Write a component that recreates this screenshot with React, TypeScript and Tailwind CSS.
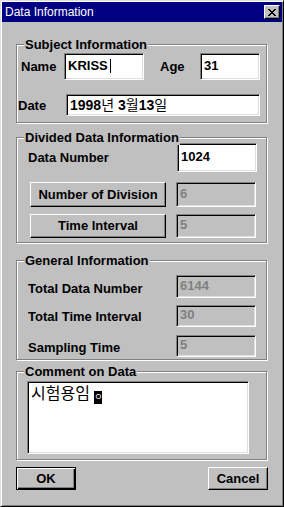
import type { ReactNode } from "react";

const font = { fontFamily: '"Liberation Sans", Arial, "Noto Sans CJK KR", sans-serif' };

const sunken =
  "border border-t-[#808080] border-l-[#808080] border-b-white border-r-white shadow-[inset_1px_1px_0_#000,inset_-1px_-1px_0_#dfdfdf]";
const raised =
  "border border-t-white border-l-white border-b-black border-r-black shadow-[inset_-1px_-1px_0_#808080]";

const Group = ({ title, className, children }: { title: string; className: string; children: ReactNode }) => (
  <div className={`relative ml-[15px] w-[251px] border border-[#808080] shadow-[inset_1px_1px_0_#fff,1px_1px_0_#fff] ${className}`}>
    <span className="absolute left-[7px] top-[-8px] bg-[#c0c0c0] px-[1px] text-[13px] font-bold leading-[15px] text-black">
      {title}
    </span>
    {children}
  </div>
);

const Edit = ({ value, w, h, disabled, children }: { value?: string; w: string; h: string; disabled?: boolean; children?: ReactNode }) => (
  <div
    className={`${sunken} ${w} ${h} flex items-center pl-[3px] pb-[2px] text-[13px] font-bold ${
      disabled ? "bg-[#c0c0c0] text-[#808080]" : "bg-white text-black"
    }`}
  >
    {value}
    {children}
  </div>
);

const PushButton = ({ label, w, h }: { label: string; w: string; h: string }) => (
  <button className={`${raised} ${w} ${h} bg-[#c0c0c0] text-[13px] font-bold text-black`}>{label}</button>
);

export default function App() {
  return (
    <div
      className="flex h-[507px] w-[284px] flex-col border border-t-[#dfdfdf] border-l-[#dfdfdf] border-b-black border-r-black bg-[#c0c0c0] shadow-[inset_1px_1px_0_#fff,inset_-1px_-1px_0_#808080]"
      style={font}
    >
      <div className="mx-[1px] mt-[1px] flex h-[20px] items-center justify-between bg-[#000080] pl-[3px] pr-[2px]">
        <span className="text-[12px] leading-none text-white">Data Information</span>
        <button className={`${raised} flex h-[14px] w-[16px] items-center justify-center bg-[#c0c0c0]`}>
          <svg width="8" height="7" viewBox="0 0 8 7" shapeRendering="crispEdges">
            <path d="M0 0h2v1h-2zM6 0h2v1h-2zM1 1h2v1h-2zM5 1h2v1h-2zM2 2h4v1h-4zM3 3h2v1h-2zM2 4h4v1h-4zM1 5h2v1h-2zM5 5h2v1h-2zM0 6h2v1h-2zM6 6h2v1h-2z" fill="#000" />
          </svg>
        </button>
      </div>

      <Group title="Subject Information" className="mt-[22px] pb-[6px]">
        <div className="mt-[8px] flex h-[27px] items-center pl-[4px] text-[13px] font-bold">
          <span className="w-[43px]">Name</span>
          <Edit value="KRISS" w="w-[80px]" h="h-[27px]">
            <span className="ml-[2px] h-[14px] w-[1px] bg-black" />
          </Edit>
          <span className="ml-[16px] w-[40px]">Age</span>
          <Edit value="31" w="w-[60px]" h="h-[27px]" />
        </div>
        <div className="mt-[14px] flex h-[22px] items-center pl-[1px] text-[13px] font-bold">
          <span className="w-[48px] pt-[2px]">Date</span>
          <div className={`${sunken} flex h-[22px] w-[194px] items-center bg-white pl-[3px] text-[14px] font-bold`}>
            1998<span className="font-normal">년</span>&nbsp;3<span className="font-normal">월</span>13
            <span className="font-normal">일</span>
          </div>
        </div>
      </Group>

      <Group title="Divided Data Information" className="mt-[14px] pb-[4px]">
        <div className="mt-[5px] flex h-[29px] items-center pl-[11px] text-[13px] font-bold">
          <span className="w-[149px]">Data Number</span>
          <Edit value="1024" w="w-[80px]" h="h-[29px]" />
        </div>
        <div className="mt-[10px] flex h-[25px] items-center pl-[13px]">
          <PushButton label="Number of Division" w="w-[136px]" h="h-[25px]" />
          <div className="ml-[10px]">
            <Edit value="6" w="w-[80px]" h="h-[25px]" disabled />
          </div>
        </div>
        <div className="mt-[7px] flex h-[24px] items-center pl-[13px]">
          <PushButton label="Time Interval" w="w-[136px]" h="h-[24px]" />
          <div className="ml-[10px]">
            <Edit value="5" w="w-[80px]" h="h-[24px]" disabled />
          </div>
        </div>
      </Group>

      <Group title="General Information" className="mt-[17px] pb-[2px]">
        <div className="mt-[14px] flex h-[23px] items-center pl-[11px] text-[13px] font-bold">
          <span className="w-[148px] pt-[4px]">Total Data Number</span>
          <Edit value="6144" w="w-[80px]" h="h-[23px]" disabled />
        </div>
        <div className="mt-[7px] flex h-[22px] items-center pl-[11px] text-[13px] font-bold">
          <span className="w-[148px] pt-[2px]">Total Time Interval</span>
          <Edit value="30" w="w-[80px]" h="h-[22px]" disabled />
        </div>
        <div className="mt-[8px] flex h-[22px] items-center pl-[11px] text-[13px] font-bold">
          <span className="w-[148px] pt-[3px]">Sampling Time</span>
          <Edit value="5" w="w-[80px]" h="h-[22px]" disabled />
        </div>
      </Group>

      <Group title="Comment on Data" className="mt-[11px] pb-[5px]">
        <div className="mt-[9px] pl-[10px]">
          <div className={`${sunken} h-[73px] w-[222px] bg-white pl-[3px] pt-[2px] text-[16px] leading-[20px] text-black`}>
            시험용임{" "}
            <span className="inline-block h-[13px] w-[8px] bg-black text-center align-[-1px] text-[9px] leading-[13px] text-white">
              ㅇ
            </span>
          </div>
        </div>
      </Group>

      <div className="mt-[7px] flex justify-between px-[15px]">
        <button className="h-[23px] w-[60px] border border-black bg-[#c0c0c0] text-[13px] font-bold text-black shadow-[inset_1px_1px_0_#fff,inset_-1px_-1px_0_#000,inset_-2px_-2px_0_#808080]">
          OK
        </button>
        <PushButton label="Cancel" w="w-[60px]" h="h-[23px]" />
      </div>
    </div>
  );
}
